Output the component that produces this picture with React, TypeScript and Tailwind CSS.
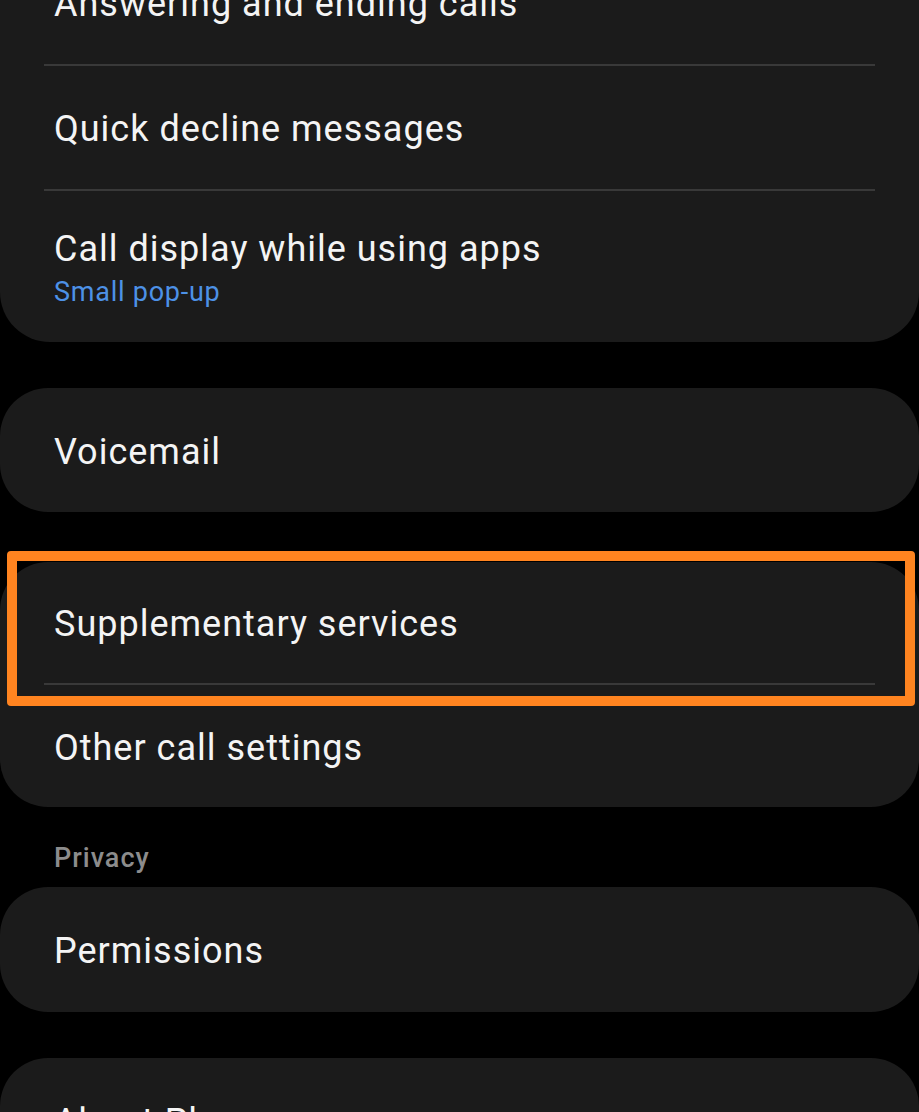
import React from 'react';

const font = { fontFamily: 'Roboto, "Noto Sans", sans-serif' };

function Row({ title, sub, h = 'h-[123px]' }: { title: string; sub?: string; h?: string }) {
  return (
    <div className={`flex ${h} flex-col justify-center px-[54px] pt-[3px]`}>
      <div className="text-[36px] leading-[42px] tracking-[1px] text-[#f4f4f4]">{title}</div>
      {sub && (
        <div className="mt-[6px] text-[27px] leading-[32px] tracking-[0.75px] text-[#4d91e6]">{sub}</div>
      )}
    </div>
  );
}

function Divider() {
  return <div className="mx-[44px] h-[2px] bg-[#393939]" />;
}

export default function App() {
  return (
    <div className="h-[1112px] w-full overflow-hidden bg-black" style={font}>
      {/* Call settings group (scrolled partially off screen) */}
      <div className="mt-[-60px] rounded-b-[50px] bg-[#1b1b1b]">
        <Row title="Answering and ending calls" h="h-[124px]" />
        <Divider />
        <Row title="Quick decline messages" />
        <Divider />
        <Row title="Call display while using apps" sub="Small pop-up" h="h-[151px]" />
      </div>

      <div className="mt-[46px] rounded-[48px] bg-[#1b1b1b]">
        <Row title="Voicemail" h="h-[124px]" />
      </div>

      <div className="relative mt-[50px] rounded-[48px] bg-[#1b1b1b]">
        <Row title="Supplementary services" h="h-[121px]" />
        <Divider />
        <Row title="Other call settings" h="h-[122px]" />
        {/* highlight annotation */}
        <div className="pointer-events-none absolute left-[7px] right-[4px] top-[-11px] h-[155px] rounded-[4px] border-[10px] border-[#ff8420]" />
      </div>

      <div className="px-[54px] pb-[14px] pt-[36px] text-[27px] font-medium leading-[30px] tracking-[1px] text-[#8c8c8c]">
        Privacy
      </div>

      <div className="rounded-[48px] bg-[#1b1b1b]">
        <Row title="Permissions" h="h-[125px]" />
      </div>

      <div className="mt-[46px] rounded-[48px] bg-[#1b1b1b]">
        <Row title="About Phone" h="h-[124px]" />
      </div>
    </div>
  );
}
